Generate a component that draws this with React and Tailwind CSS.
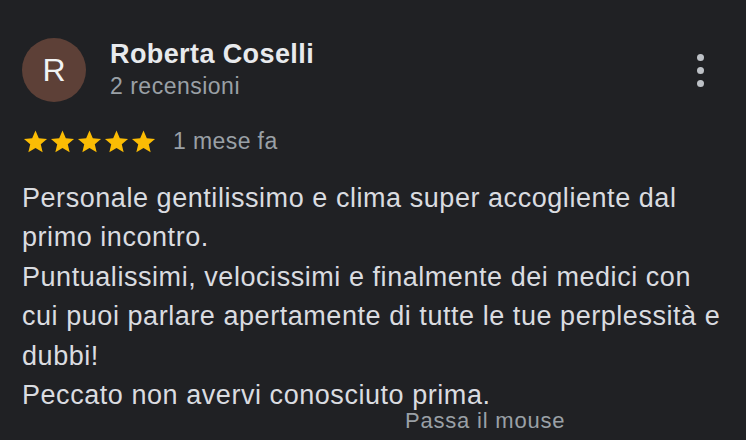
import React from 'react';

const Star = () => (
  <svg viewBox="0 0 24 24" className="w-[27px] h-[27px]" fill="#fbbc04">
    <path d="M12 2.3l2.95 6.75 7.3.62-5.55 4.8 1.66 7.18L12 17.87l-6.36 3.78 1.66-7.18-5.55-4.8 7.3-.62z" />
  </svg>
);

const App = () => {
  return (
    <div
      className="w-[746px] h-[440px] bg-[#202124] overflow-hidden relative"
      style={{ fontFamily: '"Liberation Sans", Arial, sans-serif' }}
    >
      <div className="flex items-start pl-[22px] pr-[30px] pt-[38px]">
        <div className="w-[64px] h-[64px] rounded-full bg-[#5d4037] flex items-center justify-center text-[#f1f3f4] text-[32px] leading-none shrink-0">
          R
        </div>
        <div className="ml-[24px] flex-1">
          <div className="text-[#e8eaed] text-[27px] font-bold leading-[32px] tracking-[0.4px]">Roberta Coselli</div>
          <div className="text-[#9aa0a6] text-[23px] leading-[32px] tracking-[0.5px]">2 recensioni</div>
        </div>
        <div className="flex flex-col items-center gap-[6px] pt-[16px] pr-[12px]">
          <span className="w-[7px] h-[7px] rounded-full bg-[#bdc1c6]" />
          <span className="w-[7px] h-[7px] rounded-full bg-[#bdc1c6]" />
          <span className="w-[7px] h-[7px] rounded-full bg-[#bdc1c6]" />
        </div>
      </div>

      <div className="flex items-center pl-[22px] mt-[22px]">
        <div className="flex">
          <Star />
          <Star />
          <Star />
          <Star />
          <Star />
        </div>
        <span className="ml-[16px] text-[#9aa0a6] text-[23px] tracking-[0.4px]">1 mese fa</span>
      </div>

      <div className="pl-[22px] mt-[20px] text-[#dadce0] text-[27px] leading-[39.6px] tracking-[0.55px] whitespace-nowrap">
        <p>
          Personale gentilissimo e clima super accogliente dal
          <br />
          primo incontro.
        </p>
        <p>
          Puntualissimi, velocissimi e finalmente dei medici con
          <br />
          cui puoi parlare apertamente di tutte le tue perplessità e
          <br />
          dubbi!
        </p>
        <p>Peccato non avervi conosciuto prima.</p>
      </div>

      <div className="absolute left-[405px] top-[406px] text-[#9aa0a6] text-[22px] leading-[30px] tracking-[0.8px]">
        Passa il mouse
      </div>
    </div>
  );
};

export default App;
